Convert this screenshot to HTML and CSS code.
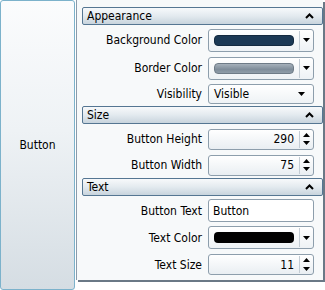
FILE: index.html
```html
<!DOCTYPE html>
<html>
<head>
<meta charset="utf-8">
<link rel="stylesheet" href="styles.css">
</head>
<body>
<div class="app">
  <div class="btn">Button</div>
  <div class="panel">
    <div class="hdr"><span>Appearance</span><svg class="chev" width="9" height="6" viewBox="0 0 9 6"><path d="M1 5 L4.5 1.5 L8 5" fill="none" stroke="#000" stroke-width="2"/></svg></div>
    <div class="row r28"><label>Background Color</label><div class="combo"><div class="swatch navy"></div><div class="drop"><svg width="7" height="4" viewBox="0 0 7 4"><path d="M0 0H7L3.5 4Z" fill="#000"/></svg></div></div></div>
    <div class="row r28"><label>Border Color</label><div class="combo"><div class="swatch gray"></div><div class="drop"><svg width="7" height="4" viewBox="0 0 7 4"><path d="M0 0H7L3.5 4Z" fill="#000"/></svg></div></div></div>
    <div class="row r23"><label>Visibility</label><div class="select"><span>Visible</span><svg width="7" height="4" viewBox="0 0 7 4"><path d="M0 0H7L3.5 4Z" fill="#000"/></svg></div></div>
    <div class="hdr"><span>Size</span><svg class="chev" width="9" height="6" viewBox="0 0 9 6"><path d="M1 5 L4.5 1.5 L8 5" fill="none" stroke="#000" stroke-width="2"/></svg></div>
    <div class="row r28"><label>Button Height</label><div class="num"><span class="val">290</span><div class="spin"><svg width="7" height="4" viewBox="0 0 7 4"><path d="M0 4H7L3.5 0Z" fill="#000"/></svg><svg width="7" height="4" viewBox="0 0 7 4"><path d="M0 0H7L3.5 4Z" fill="#000"/></svg></div></div></div>
    <div class="row r24"><label>Button Width</label><div class="num"><span class="val">75</span><div class="spin"><svg width="7" height="4" viewBox="0 0 7 4"><path d="M0 4H7L3.5 0Z" fill="#000"/></svg><svg width="7" height="4" viewBox="0 0 7 4"><path d="M0 0H7L3.5 4Z" fill="#000"/></svg></div></div></div>
    <div class="hdr"><span>Text</span><svg class="chev" width="9" height="6" viewBox="0 0 9 6"><path d="M1 5 L4.5 1.5 L8 5" fill="none" stroke="#000" stroke-width="2"/></svg></div>
    <div class="row r27"><label>Button Text</label><div class="text">Button</div></div>
    <div class="row r27"><label>Text Color</label><div class="combo"><div class="swatch black"></div><div class="drop"><svg width="7" height="4" viewBox="0 0 7 4"><path d="M0 0H7L3.5 4Z" fill="#000"/></svg></div></div></div>
    <div class="row r27"><label>Text Size</label><div class="num"><span class="val">11</span><div class="spin"><svg width="7" height="4" viewBox="0 0 7 4"><path d="M0 4H7L3.5 0Z" fill="#000"/></svg><svg width="7" height="4" viewBox="0 0 7 4"><path d="M0 0H7L3.5 4Z" fill="#000"/></svg></div></div></div>
  </div>
</div>
</body>
</html>
```
FILE: styles.css
```css
html, body {
  margin: 0;
  padding: 0;
  background: #ffffff;
}
body {
  font-family: "DejaVu Sans Condensed", "DejaVu Sans", sans-serif;
  font-size: 12px;
  color: #000;
}
.app {
  display: flex;
  align-items: flex-start;
  width: 325px;
  height: 290px;
}
.btn {
  box-sizing: border-box;
  width: 75px;
  height: 290px;
  border: 1px solid #7cb2cb;
  border-radius: 3px;
  background: linear-gradient(#fbfcfd, #eef2f5 45%, #d5dde3);
  display: flex;
  align-items: center;
  justify-content: center;
}
.panel {
  box-sizing: border-box;
  width: 247px;
  height: 280px;
  margin-left: 1px;
  border-left: 1px solid #8a9bab;
  background: #f7f9fa;
  box-shadow: 2px 2px 0 #6a7886;
  padding: 7px 0 0 5px;
  display: flex;
  flex-direction: column;
}
.hdr {
  box-sizing: border-box;
  height: 18px;
  width: 241px;
  border: 1px solid #557692;
  border-radius: 2px;
  background: linear-gradient(#f7f9fb, #e3eaef 50%, #c8d4dd);
  display: flex;
  align-items: center;
  justify-content: space-between;
  padding: 0 8px 0 4px;
  margin-bottom: 1px;
}
.row ~ .hdr { margin-top: 1px; }
.chev { display: block; }
.row {
  display: flex;
  align-items: center;
  width: 232px;
}
.r28 { height: 28px; }
.r27 { height: 27px; }
.r24 { height: 24px; }
.r23 { height: 23px; }
.row label {
  width: 126px;
  text-align: right;
  padding-right: 6px;
  box-sizing: border-box;
}
.combo, .num, .select, .text {
  box-sizing: border-box;
  width: 106px;
  border: 1px solid #8d9eac;
  border-radius: 3px;
  display: flex;
  align-items: center;
}
.combo {
  height: 23px;
  background: linear-gradient(#ffffff, #eef2f5);
  padding-left: 5px;
}
.swatch {
  width: 80px;
  height: 11px;
  border-radius: 4px;
}
.navy { background: #1c3955; border: 1px solid #142a40; box-sizing: border-box; }
.gray { background: linear-gradient(#a6b1bb, #7f8d9a 60%, #8f9ca8); border: 1px solid #6e7b87; box-sizing: border-box; }
.black { background: #000; }
.drop {
  margin-left: auto;
  width: 13px;
  height: 19px;
  border-left: 1px solid #c3ccd4;
  display: flex;
  align-items: center;
  justify-content: center;
}
.select {
  height: 20px;
  background: linear-gradient(#ffffff, #eef2f5);
  padding: 0 8px 0 5px;
  justify-content: space-between;
}
.num {
  height: 21px;
  background: linear-gradient(#ffffff, #e9eef2);
}
.val {
  flex: 1;
  text-align: right;
  padding-right: 5px;
}
.spin {
  width: 13px;
  height: 17px;
  border-left: 1px solid #c3ccd4;
  display: flex;
  flex-direction: column;
  align-items: center;
  justify-content: space-around;
}
.spin svg { display: block; }
.text {
  height: 23px;
  background: #fff;
  padding-left: 4px;
}
```
